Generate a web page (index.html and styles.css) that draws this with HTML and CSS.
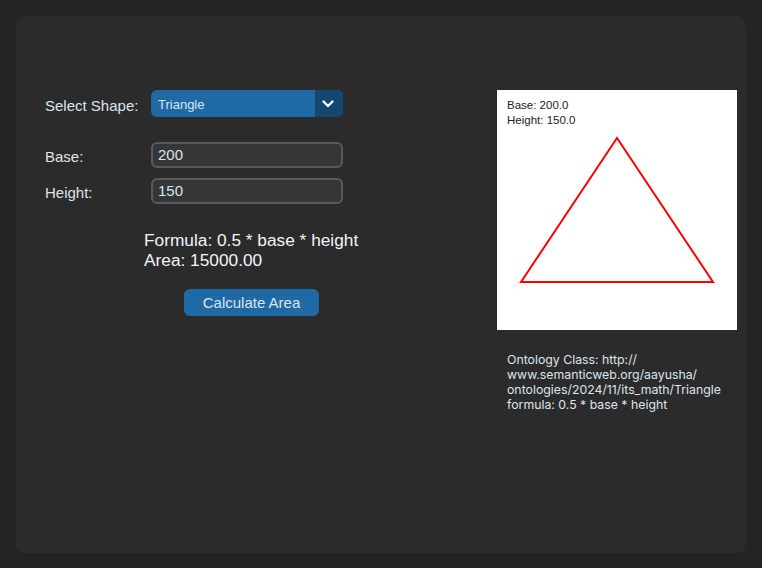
FILE: index.html
```html
<!DOCTYPE html>
<html>
<head>
<meta charset="utf-8">
<link rel="stylesheet" href="styles.css">
</head>
<body>
<div class="card">
  <div class="left">
    <div class="form">
      <div class="row row-select">
        <label class="lbl lbl-select">Select Shape:</label>
        <div class="select">
          <span class="select-text">Triangle</span>
          <span class="select-arrow">
            <svg width="12" height="8" viewBox="0 0 12 8"><polyline points="1.5,1.5 6,6 10.5,1.5" fill="none" stroke="#ffffff" stroke-width="2.4" stroke-linecap="round" stroke-linejoin="round"/></svg>
          </span>
        </div>
      </div>
      <div class="row row-base">
        <label class="lbl">Base:</label>
        <div class="entry">200</div>
      </div>
      <div class="row row-height">
        <label class="lbl">Height:</label>
        <div class="entry">150</div>
      </div>
    </div>
    <div class="result">
      <div class="result-text">Formula: 0.5 * base * height<br>Area: 15000.00</div>
      <div class="btn-row"><button class="btn">Calculate Area</button></div>
    </div>
  </div>
  <div class="right">
    <div class="canvas">
      <div class="canvas-text">Base: 200.0<br>Height: 150.0</div>
      <svg class="tri" width="240" height="240" viewBox="0 0 240 240">
        <polygon points="120,48 24,192 216,192" fill="none" stroke="#ff0000" stroke-width="2"/>
      </svg>
    </div>
    <div class="onto">
      <span class="line">Ontology Class: http://</span>
      <span class="line">www.semanticweb.org/aayusha/</span>
      <span class="line">ontologies/2024/11/its_math/Triangle</span>
      <span class="line">formula: 0.5 * base * height</span>
    </div>
  </div>
</div>
</body>
</html>
```

FILE: styles.css
```css
html, body {
  margin: 0;
  padding: 0;
  background: #242424;
}
body {
  width: 762px;
  height: 568px;
  overflow: hidden;
  font-family: "Liberation Sans", Arial, sans-serif;
  color: #dce4ee;
}
.card {
  margin: 16px 0 0 16px;
  width: 730px;
  height: 537px;
  box-sizing: border-box;
  background: #2b2b2b;
  border-radius: 9px;
  display: flex;
  padding: 74px 0 0 29px;
}
.left {
  width: 452px;
  display: flex;
  flex-direction: column;
}
.form {
  display: flex;
  flex-direction: column;
}
.row {
  display: grid;
  grid-template-columns: 106px 192px;
  align-items: center;
}
.row-base {
  margin-top: 25px;
}
.row-height {
  margin-top: 10px;
}
.lbl {
  font-size: 15px;
  color: #dce4ee;
  padding-top: 2px;
}
.lbl-select {
  padding-top: 3px;
}
.select {
  height: 27px;
  background: #1f6aa5;
  border-radius: 6px;
  display: flex;
  overflow: hidden;
}
.select-text {
  flex: 1;
  font-size: 13px;
  line-height: 27px;
  padding-left: 7px;
  padding-top: 1px;
  color: #dce4ee;
}
.select-arrow {
  width: 26px;
  background: #144870;
  display: flex;
  align-items: center;
  justify-content: center;
  padding-right: 2px;
}
.entry {
  height: 26px;
  box-sizing: border-box;
  background: #343638;
  border: 2px solid #565b5e;
  border-radius: 6px;
  font-size: 15px;
  line-height: 22px;
  padding-left: 5px;
  color: #dce4ee;
}
.result {
  margin-left: 99px;
  margin-top: 26px;
  width: 220px;
}
.result-text {
  font-size: 17.3px;
  line-height: 20px;
  color: #f2f4f7;
}
.btn-row {
  margin-top: 19px;
  padding-left: 40px;
}
.btn {
  width: 135px;
  height: 27px;
  border: none;
  border-radius: 6px;
  background: #1f6aa5;
  color: #dce4ee;
  font-family: "Liberation Sans", Arial, sans-serif;
  font-size: 15px;
  padding: 0;
}
.right {
  width: 240px;
  display: flex;
  flex-direction: column;
}
.canvas {
  position: relative;
  width: 240px;
  height: 240px;
  background: #ffffff;
}
.canvas-text {
  position: absolute;
  left: 10px;
  top: 8px;
  font-size: 11.5px;
  line-height: 15px;
  color: #222222;
}
.tri {
  display: block;
}
.onto {
  margin-top: 22px;
  padding-left: 10px;
  font-family: Inter, "Liberation Sans", sans-serif;
  font-size: 12.3px;
  line-height: 15px;
  color: #dce4ee;
}
.line {
  display: block;
  white-space: nowrap;
}
```
